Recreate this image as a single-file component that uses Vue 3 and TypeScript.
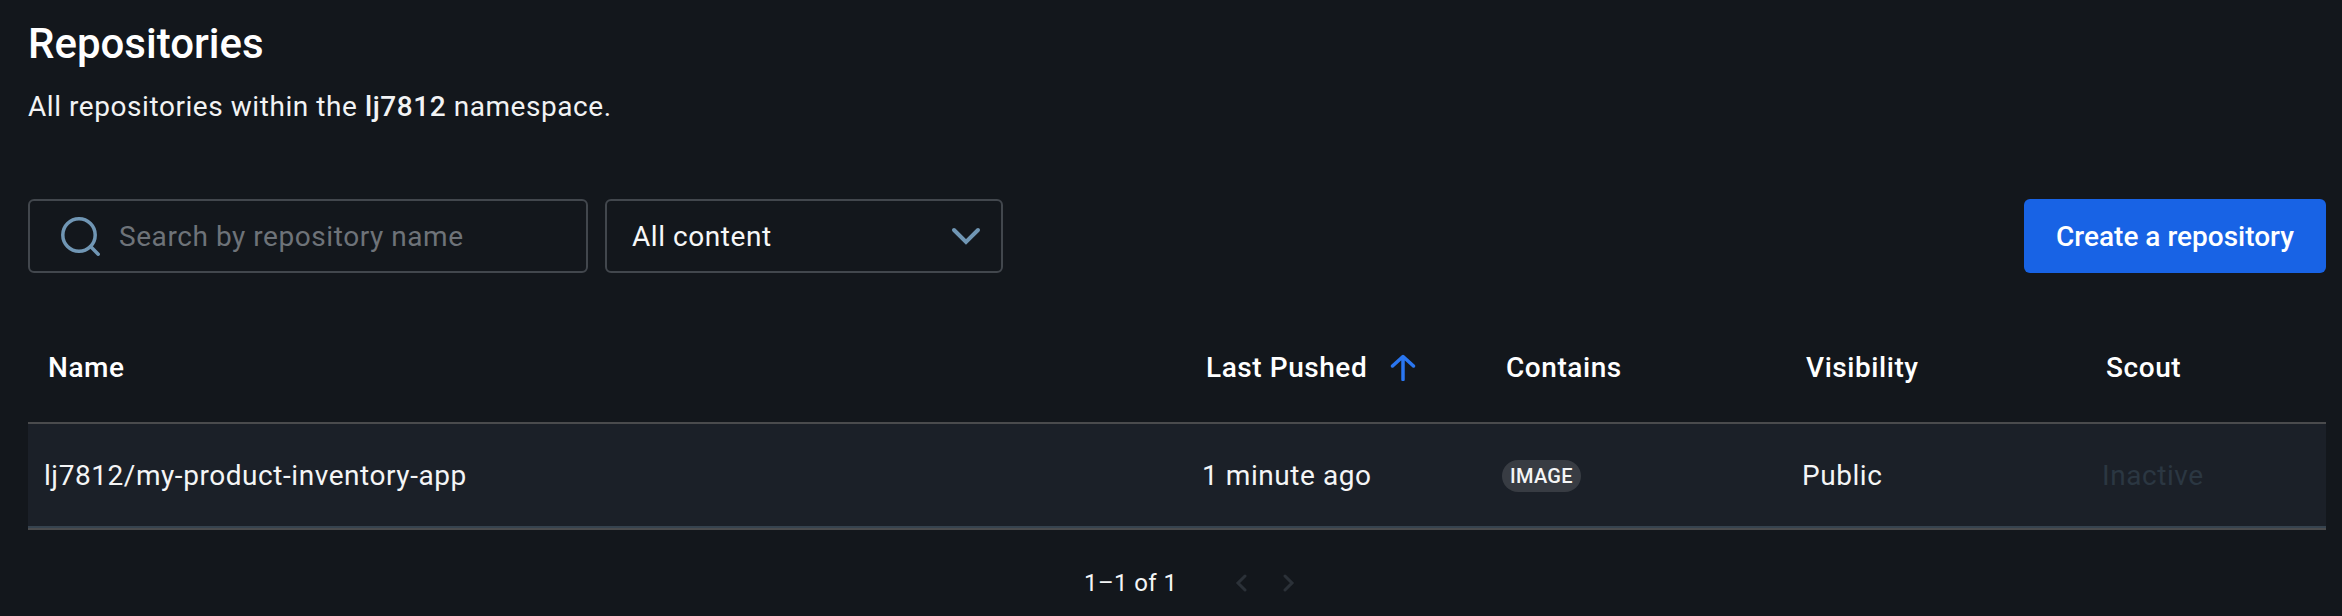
<script setup lang="ts">
interface Column {
  label: string
  sorted?: boolean
}

const columns: Column[] = [
  { label: 'Name' },
  { label: 'Last Pushed', sorted: true },
  { label: 'Contains' },
  { label: 'Visibility' },
  { label: 'Scout' },
]
</script>

<template>
  <main class="page">
    <h1 class="title">Repositories</h1>
    <p class="subtitle">All repositories within the <strong>lj7812</strong> namespace.</p>

    <div class="toolbar">
      <label class="search">
        <svg class="search-icon" viewBox="0 0 40 40" fill="none">
          <circle cx="19" cy="19" r="16.2" />
          <path d="M30.6 30.6l7.6 7.6" />
        </svg>
        <span class="placeholder">Search by repository name</span>
      </label>
      <div class="select">
        <span>All content</span>
        <svg class="chevron" viewBox="0 0 30 18" fill="none">
          <path d="M3 3l12 12L27 3" />
        </svg>
      </div>
      <button class="create" type="button">Create a repository</button>
    </div>

    <div class="table">
      <div class="head">
        <div v-for="col in columns" :key="col.label" class="th">
          <span>{{ col.label }}</span>
          <svg v-if="col.sorted" class="sort" viewBox="0 0 26 28" fill="none">
            <path d="M13 26.5V4M2.5 13L13 3.5 23.5 13" />
          </svg>
        </div>
      </div>
      <div class="row">
        <div class="td">lj7812/my-product-inventory-app</div>
        <div class="td">1 minute ago</div>
        <div class="td"><span class="badge">IMAGE</span></div>
        <div class="td">Public</div>
        <div class="td inactive">Inactive</div>
      </div>
    </div>

    <div class="pager">
      <span>1–1 of 1</span>
      <div class="pager-btns">
        <svg viewBox="0 0 12 18" fill="none"><path d="M10 2L3 9l7 7" /></svg>
        <svg viewBox="0 0 12 18" fill="none"><path d="M2 2l7 7-7 7" /></svg>
      </div>
    </div>
  </main>
</template>

<style>
html, body {
  margin: 0;
  background: #13171c;
}
</style>

<style scoped>
.page {
  box-sizing: border-box;
  width: 2342px;
  height: 616px;
  padding: 20px 16px 0 28px;
  overflow: hidden;
  background: #13171c;
  color: #fff;
  font-family: Roboto, "Liberation Sans", sans-serif;
}

.title {
  margin: 0;
  font-size: 42px;
  line-height: 48px;
  font-weight: 500;
}

.subtitle {
  margin: 21px 0 0;
  font-size: 28px;
  line-height: 36px;
  letter-spacing: 0.56px;
  color: #f2f3f4;
}

.subtitle strong {
  font-weight: 500;
}

/* ---- toolbar ---- */
.toolbar {
  display: flex;
  align-items: stretch;
  gap: 17px;
  margin-top: 74px;
  height: 74px;
}

.search,
.select {
  box-sizing: border-box;
  display: flex;
  align-items: center;
  border: 2px solid #42474d;
  border-radius: 6px;
  font-size: 28px;
  letter-spacing: 0.56px;
}

.search {
  width: 560px;
  padding-left: 30px;
  gap: 19px;
}

.search-icon {
  width: 40px;
  height: 40px;
  flex: none;
  stroke: #7096b4;
  stroke-width: 3.5;
  stroke-linecap: round;
}

.placeholder {
  color: #6e7379;
}

.select {
  width: 398px;
  padding: 0 20px 0 25px;
  justify-content: space-between;
  color: #f6f7f8;
}

.chevron {
  width: 30px;
  height: 18px;
  stroke: #7096b4;
  stroke-width: 4;
  stroke-linecap: round;
}

.create {
  margin-left: auto;
  width: 302px;
  border: 0;
  border-radius: 6px;
  background: #1863e5;
  color: #fff;
  font: 500 28px Roboto, "Liberation Sans", sans-serif;
  letter-spacing: 0;
}

/* ---- table ---- */
.table {
  margin-top: 39px;
  width: 2298px;
}

.head,
.row {
  display: grid;
  grid-template-columns: 1158px 300px 300px 300px 240px;
}

.head {
  height: 110px;
  align-items: center;
}

.th {
  display: flex;
  align-items: center;
  gap: 23px;
  padding-left: 20px;
  font-size: 28px;
  font-weight: 500;
  letter-spacing: 0.56px;
}

.sort {
  width: 26px;
  height: 28px;
  stroke: #2a76f0;
  stroke-width: 3.5;
  stroke-linecap: round;
  stroke-linejoin: round;
}

.row {
  box-sizing: border-box;
  height: 108px;
  padding-bottom: 2px;
  align-items: center;
  background: #1b2028;
  border-top: 2px solid #4a4b4d;
  border-bottom: 2px solid #4a4b4d;
  box-shadow: inset 0 -2px 0 #36434f;
}

.td {
  padding-left: 16px;
  font-size: 28px;
  letter-spacing: 0.56px;
  color: #f4f5f6;
}

.badge {
  display: inline-block;
  padding: 0 8px;
  height: 32px;
  line-height: 32px;
  border-radius: 16px;
  background: #383c43;
  font-size: 20px;
  font-weight: 500;
  letter-spacing: 0.3px;
  vertical-align: middle;
}

.inactive {
  color: #2b3742;
}

/* ---- pager ---- */
.pager {
  display: flex;
  align-items: center;
  margin: 28px 0 0 1056px;
  height: 50px;
  font-size: 24px;
  letter-spacing: 0.4px;
  color: #f4f5f6;
}

.pager-btns {
  display: flex;
  gap: 36px;
  margin-left: 58px;
}

.pager-btns svg {
  width: 12px;
  height: 18px;
  stroke: #2b3138;
  stroke-width: 3;
  stroke-linecap: round;
}
</style>
